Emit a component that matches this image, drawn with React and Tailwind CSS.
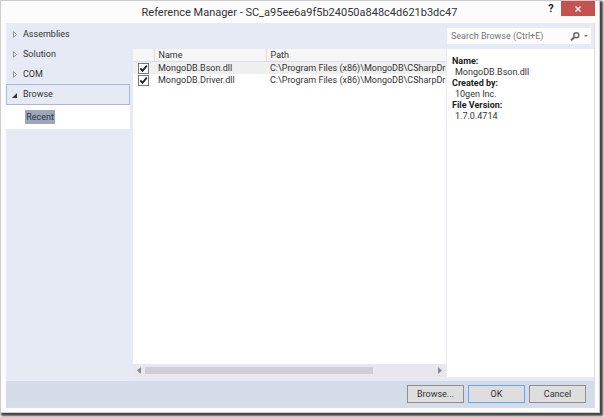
import React, { useState } from 'react'

const categories = ['Assemblies', 'Solution', 'COM']

const initialReferences = [
    { name: 'MongoDB.Bson.dll', path: 'C:\\Program Files (x86)\\MongoDB\\CSharpDriv', checked: true },
    { name: 'MongoDB.Driver.dll', path: 'C:\\Program Files (x86)\\MongoDB\\CSharpDriv', checked: true },
]

const details = [
    { label: 'Name:', value: 'MongoDB.Bson.dll' },
    { label: 'Created by:', value: '10gen Inc.' },
    { label: 'File Version:', value: '1.7.0.4714' },
]

const TitleBar = () => (
    <header className="flex h-[22px] shrink-0 items-start">
        <h1 className="flex-1 pl-[52px] pt-0.5 text-center text-[11px] leading-5 whitespace-nowrap text-[#333]">
            Reference Manager - SC_a95ee6a9f5b24050a848c4d621b3dc47
        </h1>
        <button aria-label="Help" className="h-4 w-5 text-[11px] leading-4 font-bold text-[#222]">?</button>
        <button aria-label="Close" className="flex h-[15px] w-[34px] items-center justify-center bg-[#c75050]">
            <svg className="h-[6px] w-[6px]" viewBox="0 0 6 6" stroke="#fff" strokeWidth="1.4">
                <path d="M0.5 0.5l5 5M5.5 0.5l-5 5" />
            </svg>
        </button>
    </header>
)

const Sidebar = () => (
    <nav className="w-[124px] shrink-0 pt-px">
        {categories.map((category) => (
            <button key={category} className="flex h-5 w-full items-center pt-px pl-[7px] text-left">
                <svg className="mr-[6px] h-[7px] w-1" viewBox="0 0 4 7" fill="#f4f6fb" stroke="#777" strokeWidth="0.8">
                    <path d="M0.5 0.8v5.4l3-2.7z" />
                </svg>
                {category}
            </button>
        ))}
        <button className="flex h-[21px] w-full items-center border border-[#a9b8d9] pt-px pl-[5px] text-left">
            <svg className="mr-[6px] h-[5px] w-[5px]" viewBox="0 0 5 5" fill="#333">
                <path d="M5 0v5H0z" />
            </svg>
            Browse
        </button>
        <div className="bg-white py-[5px] pl-[19px]">
            <button className="block h-[14px] w-[30px] bg-[#9ba7bf] leading-[14px]">Recent</button>
        </div>
    </nav>
)

const ReferenceTable = ({ references, onToggle }) => (
    <div className="mt-[26px] flex min-w-0 flex-1 flex-col overflow-hidden bg-white">
        <div className="min-h-0 flex-1 overflow-hidden">
            <table className="w-full table-fixed border-collapse">
                <thead>
                    <tr className="h-3 border-b border-[#dcdde6] bg-[#f6f6f7] text-left leading-3">
                        <th className="w-[21px] border-r border-[#dcdde6] p-0" aria-label="Selected"></th>
                        <th className="w-[112px] border-r border-[#dcdde6] p-0 pl-1 font-normal">Name</th>
                        <th className="p-0 pl-1 font-normal">Path</th>
                    </tr>
                </thead>
                <tbody>
                    {references.map((ref, index) => (
                        <tr key={ref.name} className={`h-3 leading-3 ${index === 0 ? 'bg-[#efefef]' : 'bg-white'}`}>
                            <td className="p-0 pl-[5px]">
                                <label className="relative block h-[11px] w-[11px]">
                                    <input
                                        type="checkbox"
                                        aria-label={ref.name}
                                        checked={ref.checked}
                                        onChange={() => onToggle(ref.name)}
                                        className="block h-[11px] w-[11px] appearance-none border border-[#777] bg-white"
                                    />
                                    {ref.checked && (
                                        <svg className="pointer-events-none absolute inset-0 h-[11px] w-[11px]" viewBox="0 0 11 11" fill="none" stroke="#222" strokeWidth="1.8">
                                            <path d="M2.3 5.3l2.2 2.6L8.8 2.6" />
                                        </svg>
                                    )}
                                </label>
                            </td>
                            <td className="p-0 pl-1 whitespace-nowrap">{ref.name}</td>
                            <td className="overflow-hidden p-0 pl-1 whitespace-nowrap">{ref.path}</td>
                        </tr>
                    ))}
                </tbody>
            </table>
        </div>
        {/* Horizontal scrollbar */}
        <div className="flex h-[13px] shrink-0 items-center bg-[#e8e8ec] px-1">
            <svg className="h-[7px] w-1" viewBox="0 0 4 7" fill="#868999"><path d="M4 0v7L0 3.5z" /></svg>
            <div className="mx-1 h-[7px] flex-1">
                <div className="h-full w-[79%] bg-[#cfcfd3]"></div>
            </div>
            <svg className="h-[7px] w-1" viewBox="0 0 4 7" fill="#868999"><path d="M0 0v7l4-3.5z" /></svg>
        </div>
    </div>
)

const DetailsPanel = () => (
    <aside className="ml-px flex w-[147px] shrink-0 flex-col pt-[5px]">
        <div className="mr-[3px] flex h-4 shrink-0 items-center bg-[#fcfcfd] pl-1">
            <input
                type="text"
                aria-label="Search Browse"
                placeholder="Search Browse (Ctrl+E)"
                className="min-w-0 flex-1 pt-px text-[9px] outline-none placeholder:text-[#777]"
            />
            <button aria-label="Search" className="flex items-center gap-1 pr-[3px]">
                <svg className="h-[9px] w-[10px]" viewBox="0 0 10 9" fill="none" stroke="#6b6b6b">
                    <circle cx="6.3" cy="3.3" r="2.5" strokeWidth="1.5" />
                    <path d="M4.3 5.2L1 8.3" strokeWidth="2" />
                </svg>
                <svg className="h-[2px] w-1" viewBox="0 0 4 2" fill="#777"><path d="M0 0h4L2 2z" /></svg>
            </button>
        </div>
        <dl className="mt-[5px] flex-1 bg-white px-[5px] pt-[7px] leading-[11px]">
            {details.map(({ label, value }) => (
                <div key={label}>
                    <dt className="font-bold text-[#222]">{label}</dt>
                    <dd className="pl-[3px]">{value}</dd>
                </div>
            ))}
        </dl>
    </aside>
)

const App = () => {
    const [references, setReferences] = useState(initialReferences)

    const handleToggle = (name) => {
        setReferences((prev) =>
            prev.map((ref) => (ref.name === name ? { ...ref, checked: !ref.checked } : ref))
        )
    }

    return (
        <div className="flex min-h-screen bg-white pr-1 pb-1 font-[Roboto,sans-serif] text-[9px] text-[#333]">
            <div className="flex min-w-0 flex-1 flex-col border border-[#ccc] bg-[#fcfcfc] pr-1 pb-1 pl-[5px] shadow-[2px_2px_2px_1px_#444]">
                <TitleBar />
                <div className="flex flex-1 flex-col border-r border-b border-[#dcdde0]">
                    <main className="flex flex-1 bg-[#e6eaf5] pb-1">
                        <Sidebar />
                        <div className="w-[3px] shrink-0"></div>
                        <ReferenceTable references={references} onToggle={handleToggle} />
                        <DetailsPanel />
                    </main>
                    <footer className="flex h-[26px] shrink-0 items-center justify-end gap-1 bg-[#d5dbe9] pr-2">
                        <button className="h-[18px] w-[57px] border border-[#8f8f8f] bg-[#dedede] pt-px">Browse...</button>
                        <button className="h-[18px] w-[57px] border border-[#62a8f5] bg-[#dedede] pt-px">OK</button>
                        <button className="h-[18px] w-[57px] border border-[#8f8f8f] bg-[#dedede] pt-px">Cancel</button>
                    </footer>
                </div>
            </div>
        </div>
    )
}

export default App
